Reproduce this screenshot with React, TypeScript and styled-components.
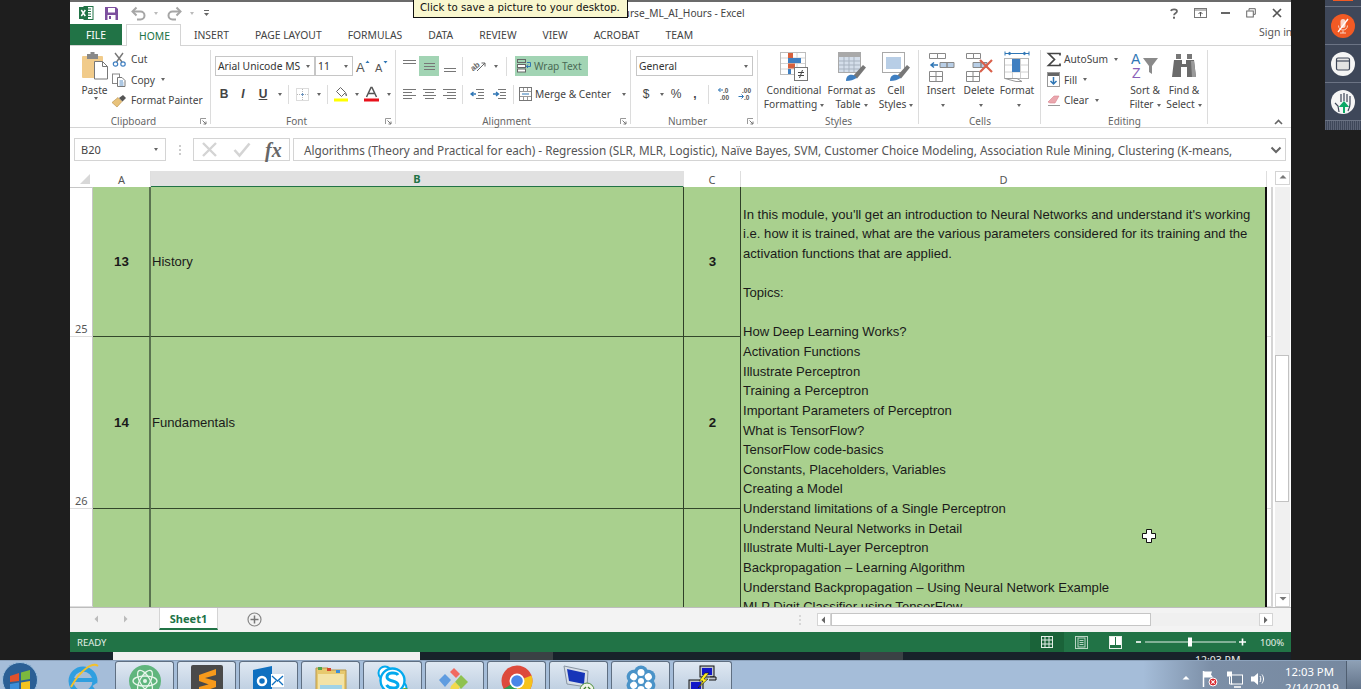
import React from 'react';
import styled, { createGlobalStyle } from 'styled-components';

const UI_FONT = '"Noto Sans", "Open Sans", sans-serif';
const CELL_FONT = '"Liberation Sans", Arial, sans-serif';

const GlobalStyle = createGlobalStyle`
  html, body { margin: 0; padding: 0; background: #1e1e1e; }
  * { box-sizing: border-box; }
  svg { display: block; overflow: visible; }
`;

const Page = styled.div`
  width: 1361px;
  height: 689px;
  overflow: hidden;
  display: flex;
  flex-direction: column;
  background: #1e1e1e;
  font-family: ${UI_FONT};
`;

const Desk = styled.div`
  display: flex;
  height: 652px;
  padding-left: 70px;
  flex: none;
`;

const Window = styled.div`
  position: relative;
  width: 1221px;
  height: 652px;
  flex: none;
  display: flex;
  flex-direction: column;
  background: #fff;
  border-top: 2px solid #6b6b6b;
`;

const TitleBar = styled.div`
  height: 22px;
  display: flex;
  align-items: center;
  flex: none;
  color: #444;
  font-size: 11px;
`;

const Qat = styled.div`
  display: flex;
  align-items: center;
  width: 541px;
  padding-left: 8px;
  flex: none;
`;

const QatBtn = styled.span<{ $w: number }>`
  width: ${p => p.$w}px;
  flex: none;
  display: flex;
  align-items: center;
`;

const TitleText = styled.div`
  flex: 1;
  color: #444;
  font-size: 10.2px;
`;

const WinControls = styled.div`
  display: flex;
  align-items: center;
  margin-right: 1px;
`;

const WinBtn = styled.span`
  width: 25.7px;
  display: flex;
  justify-content: center;
  color: #666;
`;

const Tooltip = styled.div`
  position: absolute;
  left: 343px;
  top: -2px;
  width: 215px;
  height: 18px;
  background: #f9f7cf;
  border: 1px solid #111;
  border-top: none;
  color: #111;
  font-family: "DejaVu Sans", sans-serif;
  font-size: 10.2px;
  line-height: 15px;
  padding-left: 6px;
  white-space: nowrap;
`;

const TabRow = styled.div`
  height: 22px;
  flex: none;
  display: flex;
  align-items: stretch;
  border-bottom: 1px solid #d4d4d4;
  font-size: 10.36px;
  color: #444;
`;

const FileTab = styled.div`
  width: 52px;
  background: #217346;
  color: #fff;
  display: flex;
  align-items: center;
  justify-content: center;
  margin-right: 4px;
`;

const Tab = styled.div<{ $active?: boolean }>`
  display: flex;
  align-items: center;
  padding: ${p => (p.$active ? '0 10px 0 12px' : '0 12px')};
  height: ${p => (p.$active ? '22px' : '21px')};
  color: ${p => (p.$active ? '#217346' : '#444')};
  background: ${p => (p.$active ? '#fff' : 'transparent')};
  border: ${p => (p.$active ? '1px solid #d4d4d4' : '1px solid transparent')};
  border-bottom: none;
`;

const SignIn = styled.div`
  margin-left: auto;
  align-self: center;
  font-size: 10.5px;
  color: #555;
  width: 32px;
  overflow: hidden;
  white-space: nowrap;
  position: relative;
  top: -3px;
`;

const Ribbon = styled.div`
  height: 82px;
  flex: none;
  display: flex;
  border-bottom: 1px solid #d4d4d4;
  font-size: 10.2px;
  color: #444;
`;

const Group = styled.div<{ $w: number; $plain?: boolean }>`
  position: relative;
  width: ${p => p.$w}px;
  flex: none;
  height: 81px;
  &::after {
    content: '';
    display: ${p => (p.$plain ? 'none' : 'block')};
    position: absolute;
    right: 0;
    top: 4px;
    bottom: 3px;
    width: 1px;
    background: #dcdcdc;
  }
`;

const GroupBody = styled.div<{ $pl?: number; $pt?: number }>`
  height: 68px;
  display: flex;
  padding-left: ${p => p.$pl ?? 0}px;
  padding-top: ${p => p.$pt ?? 0}px;
`;

const Stack = styled.div<{ $gap?: number; $w?: number; $mt?: number }>`
  display: flex;
  flex-direction: column;
  flex: none;
  width: ${p => (p.$w ? `${p.$w}px` : 'auto')};
  margin-top: ${p => p.$mt ?? 0}px;
  gap: ${p => p.$gap ?? 0}px;
`;

const GroupLabel = styled.div<{ $launcher?: boolean }>`
  height: 13px;
  text-align: center;
  font-size: 10px;
  line-height: 14px;
  color: #666;
  padding-right: ${p => (p.$launcher ? 14 : 0)}px;
`;

const Launcher = styled.span`
  position: absolute;
  right: 4px;
  bottom: 2px;
`;

const ToolRow = styled.div<{ $gap?: number }>`
  display: flex;
  align-items: center;
  height: 20px;
  gap: ${p => p.$gap ?? 0}px;
`;

const Tool = styled.span<{ $w: number; $on?: boolean }>`
  width: ${p => p.$w}px;
  height: 20px;
  flex: none;
  display: flex;
  align-items: center;
  justify-content: center;
  background: ${p => (p.$on ? '#a2d4b4' : 'transparent')};
  font-family: ${CELL_FONT};
  font-size: 12px;
  color: #444;
`;

const ToolSep = styled.span<{ $m: number }>`
  width: 1px;
  height: 19px;
  flex: none;
  background: #dcdcdc;
  margin: 0 ${p => p.$m}px;
`;

const Select = styled.div<{ $w: number }>`
  width: ${p => p.$w}px;
  height: 20px;
  flex: none;
  border: 1px solid #c6c6c6;
  background: #fff;
  display: flex;
  align-items: center;
  justify-content: space-between;
  padding: 0 4px 0 2px;
  color: #333;
  font-size: 10.3px;
  white-space: nowrap;
`;

const Caret = styled.span<{ $c?: string }>`
  display: inline-block;
  width: 0;
  height: 0;
  flex: none;
  border-left: 2.5px solid transparent;
  border-right: 2.5px solid transparent;
  border-top: 3px solid ${p => p.$c ?? '#666'};
  vertical-align: middle;
  margin-left: 3px;
`;

const SmallBtn = styled.div`
  display: flex;
  align-items: center;
  gap: 3px;
  height: 20.5px;
  white-space: nowrap;
`;

const IconBox = styled.span<{ $w: number }>`
  width: ${p => p.$w}px;
  flex: none;
  display: flex;
  justify-content: center;
`;

const LargeBtn = styled.div<{ $w: number }>`
  width: ${p => p.$w}px;
  flex: none;
  display: flex;
  flex-direction: column;
  align-items: center;
  text-align: center;
  line-height: 14px;
  white-space: nowrap;
`;

const LargeIcon = styled.div<{ $h?: number }>`
  height: ${p => p.$h ?? 32}px;
  display: flex;
  align-items: center;
  justify-content: center;
`;

const WrapLabel = styled.span<{ $w: number }>`
  display: flex;
  align-items: center;
  gap: 2px;
  width: ${p => p.$w}px;
  height: 20px;
  padding-left: 2px;
  background: #a2d4b4;
  color: #4a6a55;
  white-space: nowrap;
`;

const MergeLabel = styled.span`
  display: flex;
  align-items: center;
  gap: 3px;
  padding-left: 2px;
  white-space: nowrap;
`;

const MergeCaret = styled(Caret)`
  margin-left: 8px;
`;

const Collapse = styled.div`
  position: absolute;
  right: 8px;
  bottom: 2px;
`;

const FormulaBar = styled.div`
  height: 43px;
  flex: none;
  display: flex;
  align-items: flex-start;
  padding: 10px 5px 0 4px;
  background: #fff;
`;

const NameBox = styled.div`
  width: 92px;
  height: 23px;
  border: 1px solid #d4d4d4;
  display: flex;
  align-items: center;
  justify-content: space-between;
  padding: 0 7px 0 6px;
  color: #444;
  font-size: 11px;
`;

const Dots = styled.span`
  width: 27px;
  height: 23px;
  display: flex;
  align-items: center;
  justify-content: center;
`;

const FxBox = styled.div`
  width: 97px;
  height: 23px;
  border: 1px solid #d4d4d4;
  display: flex;
  align-items: center;
  gap: 14.5px;
  padding-left: 7px;
`;

const FxGlyph = styled.span`
  font-family: "Liberation Serif", serif;
  font-style: italic;
  font-weight: bold;
  font-size: 20px;
  line-height: 20px;
  color: #666;
`;

const FormulaInput = styled.div`
  flex: 1;
  margin-left: 3px;
  height: 23px;
  border: 1px solid #d4d4d4;
  display: flex;
  align-items: center;
  justify-content: space-between;
  padding: 0 3px 0 10px;
  color: #555;
  font-size: 11.75px;
  white-space: nowrap;
  overflow: hidden;
`;

const columnTemplate = '23px 58px 533px 57px 526px 6px 18px';

const ColHeaders = styled.div`
  height: 16px;
  flex: none;
  display: grid;
  grid-template-columns: ${columnTemplate};
  font-size: 11px;
  color: #555;
  background: #fff;
`;

const Corner = styled.div`
  display: flex;
  align-items: flex-end;
  justify-content: flex-end;
  padding: 0 3px 3px 0;
  border-bottom: 1px solid #c6c6c6;
`;

const ColHead = styled.div<{ $sel?: boolean }>`
  display: flex;
  align-items: center;
  justify-content: center;
  background: ${p => (p.$sel ? '#e1e1e1' : '#fff')};
  color: ${p => (p.$sel ? '#217346' : '#555')};
  font-weight: ${p => (p.$sel ? 700 : 400)};
  border-right: 1px solid ${p => (p.$sel ? '#e1e1e1' : '#dedede')};
  border-bottom: ${p => (p.$sel ? '2px solid #217346' : '1px solid #c6c6c6')};
`;

const UpCell = styled.div`
  grid-column: 6 / span 2;
  display: flex;
  justify-content: flex-end;
  padding-right: 1px;
`;

const Sheet = styled.div`
  position: relative;
  height: 420px;
  flex: none;
  display: grid;
  grid-template-columns: ${columnTemplate};
  grid-template-rows: 150px 172px 98px;
  overflow: hidden;
  font-family: ${CELL_FONT};
  font-size: 13.1px;
  color: #1a1a1a;
`;

const RowHead = styled.div`
  display: flex;
  align-items: flex-end;
  padding: 0 0 1px 5px;
  font-family: ${UI_FONT};
  font-size: 11px;
  line-height: 12px;
  color: #555;
  border-right: 1px solid #c6c6c6;
  border-bottom: 1px solid #dedede;
`;

const Cell = styled.div<{ $bold?: boolean; $center?: boolean; $open?: boolean; $soft?: boolean }>`
  background: #a9d08e;
  display: flex;
  align-items: center;
  justify-content: ${p => (p.$center ? 'center' : 'flex-start')};
  padding: 0 0 0 ${p => (p.$center ? 1 : 1)}px;
  font-weight: ${p => (p.$bold ? 700 : 400)};
  font-size: ${p => (p.$bold ? '13.33px' : 'inherit')};
  border-right: ${p => (p.$soft ? '2px solid #5a7350' : '1px solid #2f4028')};
  border-bottom: ${p => (p.$open ? 'none' : '1px solid #33472b')};
`;

const Merged = styled.div`
  grid-column: 5;
  grid-row: 1 / span 3;
  background: #a9d08e;
  border-right: 2px solid #111;
  padding: 17.5px 0 0 2px;
  line-height: 19.65px;
  overflow: hidden;
  white-space: pre;
`;

const TextLine = styled.div`
  height: 19.65px;
`;

const SpareCell = styled.div`
  border-right: 2px solid #d4d4d4;
  border-bottom: 1px solid #dedede;
`;

const ScrollColumn = styled.div`
  grid-column: 7;
  grid-row: 1 / span 3;
  display: flex;
  flex-direction: column;
  padding-left: 2px;
  background: #fff;
`;

const ScrollTrack = styled.div`
  flex: 1;
  width: 15px;
  padding-top: 168px;
  background: #f0f0f0;
`;

const Thumb = styled.div`
  width: 14px;
  height: 147px;
  background: #fff;
  border: 1px solid #c2c2c2;
`;

const ScrollBtn = styled.div`
  width: 15px;
  height: 14px;
  flex: none;
  background: #fff;
  border: 1px solid #d4d4d4;
  display: flex;
  align-items: center;
  justify-content: center;
`;

const CrossCursor = styled.div`
  position: absolute;
  left: 1072px;
  top: 342px;
`;

const SheetBar = styled.div`
  height: 25px;
  flex: none;
  display: flex;
  align-items: flex-start;
  background: #f3f3f3;
  border-top: 1px solid #bdbdbd;
`;

const NavArrows = styled.div`
  width: 89px;
  height: 22px;
  display: flex;
  align-items: center;
  gap: 21px;
  padding-left: 23px;
  flex: none;
`;

const SheetTab = styled.div`
  width: 59px;
  height: 22px;
  background: #fff;
  border: 1px solid #d4d4d4;
  border-top: none;
  border-bottom: 2px solid #217346;
  color: #217346;
  font-size: 11px;
  font-weight: 700;
  display: flex;
  align-items: center;
  justify-content: center;
`;

const AddSheet = styled.div`
  margin: 4px 0 0 29px;
`;

const HScroll = styled.div`
  margin-left: auto;
  margin-right: 18px;
  margin-top: 5px;
  display: flex;
  align-items: center;
`;

const HDots = styled.span`
  width: 18px;
`;

const HBtn = styled.div`
  width: 14px;
  height: 13px;
  background: #fff;
  border: 1px solid #d4d4d4;
  display: flex;
  align-items: center;
  justify-content: center;
`;

const HTrack = styled.div`
  width: 428px;
  height: 13px;
  background: #f0f0f0;
`;

const HThumb = styled.div`
  width: 320px;
  height: 13px;
  background: #fff;
  border: 1px solid #c6c6c6;
`;

const StatusBar = styled.div`
  height: 20px;
  flex: none;
  display: flex;
  align-items: center;
  background: #217346;
  color: #e4efe8;
  font-size: 9.5px;
  padding-left: 7px;
`;

const ViewBtn = styled.span<{ $on?: boolean }>`
  width: 34px;
  height: 20px;
  flex: none;
  display: flex;
  align-items: center;
  justify-content: center;
  background: ${p => (p.$on ? '#1a6339' : 'transparent')};
`;

const StatusRight = styled.div`
  margin-left: auto;
  display: flex;
  align-items: center;
`;

const SliderWrap = styled.span`
  margin-left: 4px;
`;

const ZoomText = styled.span`
  width: 45px;
  text-align: left;
  padding-left: 14px;
`;

const SidePanel = styled.div`
  margin-left: 34px;
  width: 36px;
  height: 130px;
  flex: none;
  background: #3e4759;
  display: flex;
  flex-direction: column;
`;

const SideSlot = styled.div<{ $h: number }>`
  height: ${p => p.$h}px;
  flex: none;
  display: flex;
  align-items: center;
  justify-content: center;
  border-bottom: 1px solid #6b7384;
`;

const SideGrip = styled.div`
  flex: 1;
  background: repeating-linear-gradient(90deg, #5a6274 0 1px, #3e4759 1px 2px);
`;

const OrangeTick = styled.div`
  width: 20px;
  height: 1px;
  margin-bottom: 6px;
  background: #f15a24;
`;

const Strip = styled.div`
  height: 8px;
  flex: none;
  display: flex;
  background: #1e1e1e;
`;

const StripPart = styled.div<{ $w: number; $c: string }>`
  width: ${p => p.$w}px;
  flex: none;
  background: ${p => p.$c};
  overflow: hidden;
`;

const StripClock = styled.div`
  color: #e8e8e8;
  font-size: 10.5px;
  line-height: 14px;
  padding-left: 292px;
  padding-top: 1px;
  white-space: nowrap;
`;

const Taskbar = styled.div`
  height: 29px;
  flex: none;
  display: flex;
  align-items: flex-start;
  overflow: hidden;
  border-top: 1px solid #8da3bd;
  background: linear-gradient(90deg, #a5bdd9 0, #a5bdd9 84%, #7c8fa7 89%, #76889f 100%);
`;

const StartSlot = styled.div`
  width: 65px;
  flex: none;
  padding: 1px 0 0 2px;
`;

const IeSlot = styled.div`
  width: 50px;
  flex: none;
  padding: 2px 0 0 3px;
`;

const TaskBtn = styled.div`
  width: 59px;
  height: 32px;
  flex: none;
  margin-right: 3px;
  display: flex;
  justify-content: center;
  padding-top: 3px;
  border: 1px solid #5f6f82;
  border-bottom: none;
  border-radius: 3px 3px 0 0;
  background: linear-gradient(180deg, #dfe8f2 0, #bccde0 100%);
`;

const Tray = styled.div`
  margin-left: auto;
  display: flex;
  align-items: center;
  height: 28px;
  color: #fff;
`;

const TrayIcon = styled.span<{ $w: number }>`
  width: ${p => p.$w}px;
  flex: none;
  display: flex;
  justify-content: center;
  padding-top: 7px;
`;

const Clock = styled.div`
  width: 68px;
  margin-left: 8px;
  padding-left: 7px;
  font-size: 11.3px;
  line-height: 16px;
  align-self: flex-start;
  padding-top: 3px;
  white-space: nowrap;
`;

const ShowDesktop = styled.div`
  width: 15px;
  height: 28px;
  flex: none;
  border-left: 1px solid #4f5e70;
  background: linear-gradient(180deg, #8ea0b5, #63748a);
`;

const Ico = ({ w, h = w, children }: { w: number; h?: number; children: React.ReactNode }) => (
  <svg width={w} height={h} viewBox={`0 0 ${w} ${h}`} fill="none">{children}</svg>
);

const ExcelIcon = () => (
  <Ico w={16}>
    <rect x="6" y="1.5" width="9" height="13" fill="#fff" stroke="#217346" />
    <path d="M9 4h4M9 6.500h4M9 9h4M9 11.500h4" stroke="#217346" />
    <rect x="1" y="2" width="9" height="12" fill="#217346" />
    <path d="M3.300 5l4 6M7.300 5l-4 6" stroke="#fff" strokeWidth="1.500" />
  </Ico>
);

const SaveIcon = () => (
  <Ico w={15}>
    <path d="M1 1h11l2 2v11H1z" fill="#7c4f9e" />
    <rect x="4" y="2" width="7" height="4.500" fill="#fff" />
    <rect x="3.500" y="9" width="8" height="5" fill="#fff" />
    <rect x="5" y="10" width="2" height="3" fill="#7c4f9e" />
  </Ico>
);

const UndoIcon = ({ flip }: { flip?: boolean }) => (
  <Ico w={17} h={14}>
    <g transform={flip ? 'translate(17 0) scale(-1 1)' : undefined}>
      <path d="M3 5.500h7.500a4 4 0 0 1 0 8H7" stroke="#a6a6a6" strokeWidth="2" />
      <path d="M6.500 1.500L2.500 5.500l4 4" stroke="#a6a6a6" strokeWidth="2" />
    </g>
  </Ico>
);

const QatMore = () => (
  <Ico w={7} h={8}>
    <path d="M1 1.500h5" stroke="#666" />
    <path d="M1 4l2.500 3L6 4z" fill="#666" />
  </Ico>
);

const HelpGlyph = () => (
  <Ico w={8} h={11}>
    <path d="M1 3C1.500 .8 7 .6 7 3.300 7 5.300 4 5.300 4 7.300" stroke="#666" strokeWidth="1.700" />
    <rect x="3" y="8.700" width="2" height="2" fill="#666" />
  </Ico>
);

const RibbonOptIcon = () => (
  <Ico w={13} h={10}>
    <rect x=".5" y=".5" width="12" height="9" stroke="#777" />
    <path d="M1 2h11" stroke="#777" />
    <path d="M6.500 8.500V4M4.500 6l2-2 2 2" stroke="#555" />
  </Ico>
);

const MinIcon = () => <Ico w={9} h={3}><rect y="0" width="9" height="2" fill="#666" /></Ico>;

const RestoreIcon = () => (
  <Ico w={10}>
    <path d="M3 2.500V.700h6.300v5.600H7.500" stroke="#666" />
    <rect x=".7" y="3" width="6.600" height="6" stroke="#666" />
  </Ico>
);

const CloseIcon = () => (
  <Ico w={10}>
    <path d="M1 1l8 8M9 1L1 9" stroke="#555" strokeWidth="1.700" />
  </Ico>
);

const PasteIcon = () => (
  <Ico w={28} h={28}>
    <rect x="1" y="4" width="21" height="22" rx="1" fill="#f1cb8a" />
    <rect x="6" y="2" width="11" height="5" fill="#888" />
    <rect x="9.500" y="0" width="4" height="3" fill="#888" />
    <path d="M13.500 9.500h8l5 5v12.500h-13z" fill="#fff" stroke="#777" />
    <path d="M21.500 9.500v5h5" stroke="#777" />
  </Ico>
);

const CutIcon = () => (
  <Ico w={15}>
    <path d="M3 1l7 9M11 1L4.500 10" stroke="#777" strokeWidth="1.400" />
    <circle cx="3.500" cy="12" r="2.200" stroke="#3f7fc1" strokeWidth="1.200" />
    <circle cx="11" cy="12" r="2.200" stroke="#3f7fc1" strokeWidth="1.200" />
  </Ico>
);

const CopyIcon = () => (
  <Ico w={14}>
    <rect x=".5" y="1" width="7" height="9.500" fill="#fff" stroke="#888" />
    <path d="M5.500 4.500h4.500l3 3v6h-7.500z" fill="#fff" stroke="#777" />
    <path d="M7.500 8h3.500M7.500 10h4M7.500 12h4" stroke="#5a8fc5" />
  </Ico>
);

const BrushIcon = () => (
  <Ico w={16} h={13}>
    <path d="M1 8.500l6-5 4 4-5 5.500z" fill="#e8c27a" stroke="#b58f4c" strokeWidth=".6" />
    <path d="M8 4l4-3 3 3-3.500 3.500z" fill="#555" />
  </Ico>
);

const GrowIcon = ({ up }: { up?: boolean }) => (
  <Ico w={15} h={16}>
    <text x="0" y="14" fontFamily={CELL_FONT} fontSize={up ? 13 : 11} fill="#555">A</text>
    <path d={up ? 'M9.500 5L11.500 2.500l2 2.500z' : 'M8.500 3h4l-2 2.500z'} fill="#2f76b5" />
  </Ico>
);

const BorderIcon = () => (
  <Ico w={13}>
    <rect x=".5" y=".5" width="12" height="12" stroke="#b9b9b9" strokeDasharray="1 1" />
    <path d="M6.500 1v11M1 6.500h11" stroke="#b9b9b9" strokeDasharray="1 1" />
    <path d="M5 6.500h3M6.500 5v3" stroke="#6c93bd" />
  </Ico>
);

const FillIcon = () => (
  <Ico w={15} h={16}>
    <path d="M6.500 1.500l5 5-4 4-5-5z" fill="#fff" stroke="#666" />
    <path d="M11.500 6.500c1.500 1.500 2 3 1 3.500s-1.500-1.500-1-3.500z" fill="#666" />
    <rect y="12.500" width="14" height="3" fill="#ffff00" />
  </Ico>
);

const FontColorIcon = () => (
  <Ico w={15} h={16}>
    <path d="M2.500 11L7 1.500h1L12.500 11M4.500 7.500h6" stroke="#555" strokeWidth="1.500" />
    <rect y="12.500" width="15" height="3" fill="#e8111b" />
  </Ico>
);

const LinesIcon = ({ kind }: { kind: 'left' | 'center' | 'right' | 'top' | 'mid' | 'bot' }) => {
  const paths: Record<string, string> = {
    left: 'M1 2.500h13M1 5.500h9M1 8.500h13M1 11.500h9',
    center: 'M1 2.500h13M3 5.500h9M1 8.500h13M3 11.500h9',
    right: 'M1 2.500h13M5 5.500h9M1 8.500h13M5 11.500h9',
    top: 'M1 1.500h13M1 4.500h13',
    mid: 'M2 4.500h11M2 7.500h11M2 10.500h11',
    bot: 'M2 9.500h12M2 12.500h12',
  };
  return <Ico w={15} h={14}><path d={paths[kind]} stroke="#777" /></Ico>;
};

const OrientIcon = () => (
  <Ico w={18} h={18}>
    <text x="1" y="12" fontFamily={CELL_FONT} fontSize="8" fontWeight="700" fill="#666" transform="rotate(-38 6 9)">ab</text>
    <path d="M8 14L16 6M16 6h-3.500M16 6v3.500" stroke="#666" />
  </Ico>
);

const IndentIcon = ({ inc }: { inc?: boolean }) => (
  <Ico w={15} h={12}>
    <path d="M6 1.500h8M8 4.500h6M8 7.500h6M6 10.500h8" stroke="#777" />
    <path d={inc ? 'M1 6h5M4 4l2.500 2L4 8' : 'M1 6h5M3.500 4L1 6l2.500 2'} stroke="#2f76b5" strokeWidth="1.300" />
  </Ico>
);

const WrapIcon = () => (
  <Ico w={15} h={14}>
    <rect x=".5" y=".5" width="8" height="3" stroke="#666" />
    <rect x=".5" y="5.500" width="8" height="3" stroke="#666" fill="#fff" />
    <rect x=".5" y="10" width="8" height="3" stroke="#666" fill="#fff" />
    <path d="M10 3.500h3.500v4H9.500M11 5.500L9.500 7.500 11 9" stroke="#2f76b5" />
  </Ico>
);

const MergeIcon = () => (
  <Ico w={13} h={14}>
    <rect x=".5" y=".5" width="12" height="13" stroke="#777" />
    <path d="M1 4.500h11M1 9.500h11M4.500 1v3.500M8.500 1v3.500M4.500 9.500V13M8.500 9.500V13" stroke="#999" />
    <path d="M3 7h7" stroke="#2f76b5" />
  </Ico>
);

const DecimalIcon = ({ inc }: { inc?: boolean }) => (
  <Ico w={14} h={14}>
    <text x={inc ? 5 : 4} y="6" fontFamily={CELL_FONT} fontSize="6.500" fontWeight="700" fill="#555">{inc ? '.0' : '.00'}</text>
    <text x={inc ? 2 : 6} y="13" fontFamily={CELL_FONT} fontSize="6.500" fontWeight="700" fill="#555">{inc ? '.00' : '.0'}</text>
    <path d={inc ? 'M5 3H.5M2.500 1L.5 3l2 2' : 'M.5 9.500H5M3.500 7.500l2 2-2 2'} stroke="#2f76b5" />
  </Ico>
);

const CondIcon = () => (
  <Ico w={28} h={30}>
    <rect x=".5" y=".5" width="25" height="22" fill="#fff" stroke="#bdbdbd" />
    <path d="M9 1v21M17 1v21M1 6h24M1 11.500h24M1 17h24" stroke="#d4d4d4" />
    <rect x="8" y="1" width="5" height="5" fill="#d6603d" />
    <rect x="8" y="6" width="13" height="5" fill="#3f7fc1" />
    <rect x="8" y="11.500" width="7" height="5" fill="#d6603d" />
    <rect x="8" y="17" width="3" height="5" fill="#3f7fc1" />
    <rect x="14.500" y="15.500" width="13" height="13" fill="#fff" stroke="#777" />
    <path d="M18 20.500h6M18 23.500h6M22.500 18l-3 8" stroke="#444" />
  </Ico>
);

const TableIcon = ({ full }: { full?: boolean }) => (
  <Ico w={28} h={30}>
    <rect x=".5" y=".5" width="22" height="20" fill="#fff" stroke="#a9a9a9" />
    {full ? (
      <rect x="4" y="5" width="15" height="12" fill="#b8cee6" />
    ) : (
      <>
        <rect x="1" y="1" width="21" height="4" fill="#a9a9a9" />
        <rect x="1" y="5" width="21" height="15" fill="#d4deea" />
        <path d="M6 5v15M11 5v15M16 5v15M1 9h21M1 13h21M1 17h21" stroke="#a8b3c0" />
      </>
    )}
    <path d="M15 24l10-11 3 2.500-9 11z" fill="#777" />
    <path d="M8 29c0-5 3-7 7-6 2 .5 3 2 3.500 3-3 2-6 3-10.500 3z" fill="#3f7fc1" />
  </Ico>
);

const InsertIcon = () => (
  <Ico w={26} h={30}>
    <path d="M1.500 1.500h8v5h-8zM9.500 1.500h8v5h-8z" stroke="#888" />
    <path d="M12 10.500h7v5h-7zM19 10.500h7v5h-7z" stroke="#888" fill="#b8cee6" />
    <path d="M10 13H3M6 10.500L3 13l3 2.500" stroke="#2f76b5" strokeWidth="1.500" />
    <path d="M1.500 19.500h13v10h-13zM8 19.500v10M1.500 24.500h13" stroke="#888" />
  </Ico>
);

const DeleteIcon = () => (
  <Ico w={28} h={30}>
    <path d="M1.500 1.500h7v5h-7zM8.500 1.500h7v5h-7z" stroke="#888" />
    <path d="M8 10.500h8v5H8zM16 10.500h6v5h-6z" stroke="#888" fill="#b8cee6" />
    <path d="M1.500 19.500h13v10h-13zM8 19.500v10M1.500 24.500h13" stroke="#888" />
    <path d="M15 8l12 12M27 8L15 20" stroke="#d9604a" strokeWidth="2.200" />
  </Ico>
);

const FormatIcon = () => (
  <Ico w={26} h={32}>
    <path d="M1 2.500h24M1 .5v4M25 .5v4M4 2.500l2-1.500v3zM22 2.500l-2-1.500v3z" stroke="#2f76b5" />
    <rect x=".5" y="7.500" width="24" height="20" fill="#fff" stroke="#b5b5b5" />
    <path d="M8.500 8v19M16.500 8v19M1 14h23M1 21h23" stroke="#d0d0d0" />
    <rect x="8" y="8" width="8" height="13" fill="#3f7fc1" />
    <path d="M1 27.500h12l5 3h-6z" fill="#fff" stroke="#999" />
  </Ico>
);

const SigmaIcon = () => (
  <Ico w={14} h={15}>
    <path d="M13 3.500V1.500H1.500L7.500 7.500l-6 6H13v-2" stroke="#444" strokeWidth="1.700" />
  </Ico>
);

const FillDownIcon = () => (
  <Ico w={13} h={15}>
    <rect x=".5" y=".5" width="12" height="14" fill="#fff" stroke="#999" />
    <rect x="1" y="1" width="11" height="3" fill="#666" />
    <path d="M6.500 5v7M3.500 9l3 3 3-3" stroke="#2f76b5" strokeWidth="1.500" />
  </Ico>
);

const EraserIcon = () => (
  <Ico w={14} h={12}>
    <path d="M1 8l6-6 5 0-4 7H3z" fill="#eaa7ae" stroke="#d9838e" strokeWidth=".6" />
    <path d="M1 11.500h12" stroke="#999" />
  </Ico>
);

const SortIcon = () => (
  <Ico w={28} h={30}>
    <text x="0" y="13" fontFamily={CELL_FONT} fontSize="14" fill="#2f76b5">A</text>
    <text x="1" y="27" fontFamily={CELL_FONT} fontSize="14" fill="#8b5fb8">Z</text>
    <path d="M12 7h15l-6 8v8l-3-2v-6z" fill="#8a8a8a" />
  </Ico>
);

const BinocularIcon = () => (
  <Ico w={26} h={26}>
    <path d="M5 1h5v5H5zM16 1h5v5h-5z" fill="#777" />
    <path d="M3 7h8v4h4V7h8l2 17h-9V14h-6v10H1z" fill="#6b6b6b" />
    <path d="M20 8h3l2 16h-4z" fill="#9a9a9a" />
  </Ico>
);

const LauncherIcon = () => (
  <Ico w={7}>
    <path d="M.5 6V.5H6" stroke="#999" />
    <path d="M2.500 2.500L6 6M6 3.500V6H3.500" stroke="#777" />
  </Ico>
);

const UpChevron = () => (
  <Ico w={9} h={6}><path d="M1 5l3.500-3.500L8 5" stroke="#666" strokeWidth="1.600" /></Ico>
);

const DownChevron = () => (
  <Ico w={12} h={8}><path d="M1.500 1.500L6 6l4.500-4.500" stroke="#666" strokeWidth="2" /></Ico>
);

const CrossX = () => <Ico w={17}><path d="M2 2l13 13M15 2L2 15" stroke="#d4d4d4" strokeWidth="2.400" /></Ico>;

const CheckMark = () => <Ico w={18} h={15}><path d="M1.500 8l5 5.500L16.500 1.500" stroke="#d4d4d4" strokeWidth="2.600" /></Ico>;

const CornerTri = () => <Ico w={10}><path d="M10 0v10H0z" fill="#d8d8d8" /></Ico>;

const Arrow = ({ dir, c = '#777' }: { dir: 'up' | 'down' | 'left' | 'right'; c?: string }) => {
  const d = { up: 'M.5 4.500L4 1l3.500 3.500z', down: 'M.5 1L4 4.500 7.500 1z', left: 'M5 .5L1.500 4 5 7.500z', right: 'M2 .5L5.500 4 2 7.500z' }[dir];
  return <Ico w={8} h={8}><path d={d} fill={c} /></Ico>;
};

const PlusCircle = () => (
  <Ico w={15}>
    <circle cx="7.500" cy="7.500" r="6.500" stroke="#888" strokeWidth="1.200" />
    <path d="M3.500 7.500h8M7.500 3.500v8" stroke="#777" strokeWidth="1.500" />
  </Ico>
);

const GridView = () => (
  <Ico w={12}>
    <rect x=".5" y=".5" width="11" height="11" stroke="#e4efe8" />
    <path d="M4 .5v11M8 .5v11M.5 4h11M.5 8h11" stroke="#e4efe8" />
  </Ico>
);

const PageView = () => (
  <Ico w={13}>
    <rect x=".5" y=".5" width="12" height="12" stroke="#b9d4c4" />
    <rect x="3" y="2" width="7" height="9" stroke="#b9d4c4" />
    <path d="M4.500 4.500h4M4.500 6.500h4M4.500 8.500h4" stroke="#b9d4c4" />
  </Ico>
);

const BreakView = () => (
  <Ico w={13}>
    <rect x=".5" y=".5" width="12" height="12" stroke="#e4efe8" />
    <rect x="1" y="1" width="5" height="8" fill="#fff" />
    <rect x="7" y="1" width="5" height="8" fill="#fff" />
  </Ico>
);

const ZoomSlider = () => (
  <Ico w={110} h={12}>
    <path d="M0 6h5" stroke="#fff" strokeWidth="1.600" />
    <path d="M9 6h91" stroke="#e4efe8" />
    <rect x="52" y="1.500" width="4" height="9" fill="#fff" />
    <path d="M103 6h7M106.500 2.500v7" stroke="#fff" strokeWidth="1.600" />
  </Ico>
);

const CursorCross = () => (
  <Ico w={14}>
    <path d="M4.500 .5h5v4h4v5h-4v4h-5v-4h-4v-5h4z" fill="#fff" stroke="#111" />
  </Ico>
);

const MicOff = () => (
  <Ico w={24}>
    <circle cx="12" cy="12" r="12" fill="#f15a24" />
    <rect x="9.500" y="5" width="5" height="9" rx="2.500" fill="#fbd3c4" />
    <path d="M7.500 11.500c0 6 9 6 9 0M12 16.500V19M9 19h6" stroke="#fbd3c4" />
    <path d="M7 18L17 5" stroke="#fff" strokeWidth="1.300" />
  </Ico>
);

const WindowBadge = () => (
  <Ico w={24}>
    <circle cx="12" cy="12" r="12" fill="#f5f5f5" />
    <rect x="5.500" y="6" width="13" height="12" rx="1.500" fill="#e3e3e3" stroke="#3e4759" strokeWidth="1.200" />
    <path d="M5.500 9h13" stroke="#3e4759" strokeWidth="1.200" />
  </Ico>
);

const HandBadge = () => (
  <Ico w={24}>
    <circle cx="12" cy="12" r="12" fill="#f5f5f5" />
    <path d="M4 13l3 3 1 6M10 4v8M13 3v8M16 4v8M19 6v8c0 3-1 5-2 7" stroke="#3e4759" strokeWidth="1.200" />
    <path d="M13 23v-8M10 16l3-3.500 3 3.500z" stroke="#0ca866" strokeWidth="2" fill="#0ca866" />
  </Ico>
);

const StartOrb = () => (
  <Ico w={36} h={36}>
    <circle cx="18" cy="18" r="17.500" fill="#2b5f95" stroke="#9ec0de" />
    <path d="M8 14l9-3v8l-9 1z" fill="#e1512c" />
    <path d="M19 10.500l9-2.500v9l-9 1.500z" fill="#7cb83e" />
    <path d="M8 22l9-1.500v8L8 27z" fill="#3c8ed8" />
    <path d="M19 20.500l9-1.500v8.500l-9 2z" fill="#f2c21f" />
  </Ico>
);

const IeIcon = () => (
  <Ico w={32} h={34}>
    <ellipse cx="15" cy="18" rx="12" ry="12" stroke="#2f9fe0" strokeWidth="5" />
    <path d="M5 17h22" stroke="#2f9fe0" strokeWidth="4" />
    <path d="M30 3C25-1 13 6 3 24" stroke="#f3c02a" strokeWidth="2" />
    <path d="M26 25l4-3" stroke="#a5bdd9" strokeWidth="5" />
  </Ico>
);

const AtomIcon = () => (
  <Ico w={32} h={32}>
    <circle cx="16" cy="16" r="16" fill="#5fb57d" />
    <g stroke="#e6f5ea" strokeWidth="1.300">
      <ellipse cx="16" cy="16" rx="12" ry="5" />
      <ellipse cx="16" cy="16" rx="12" ry="5" transform="rotate(60 16 16)" />
      <ellipse cx="16" cy="16" rx="12" ry="5" transform="rotate(120 16 16)" />
    </g>
    <circle cx="16" cy="16" r="2" fill="#e6f5ea" />
  </Ico>
);

const SublimeIcon = () => (
  <Ico w={32} h={32}>
    <rect width="32" height="32" rx="2" fill="#4a4a4a" />
    <path d="M25 4L8 10v6l17 6v-6L14 13l11-3zM8 16l11 3-11 3v6l17-6v-6z" fill="#f79a1b" />
  </Ico>
);

const OutlookIcon = () => (
  <Ico w={31} h={32}>
    <path d="M0 5L19 1v31L0 28z" fill="#0f70c0" />
    <circle cx="9" cy="16" r="4" stroke="#fff" strokeWidth="2.500" />
    <rect x="18" y="9" width="13" height="13" fill="#fff" />
    <path d="M19 11l5.500 5L30 11M19 20l4-4M30 20l-4-4" stroke="#0f70c0" strokeWidth="1.300" />
  </Ico>
);

const FolderIcon = () => (
  <Ico w={32} h={32}>
    <path d="M1 3h12l2 2h16v27H1z" fill="#e7c96e" stroke="#b9974a" />
    <rect x="3" y="2" width="4" height="3" fill="#52a34a" />
    <rect x="12" y="3" width="4" height="3" fill="#d4452c" />
    <rect x="21" y="5" width="4" height="3" fill="#3c8ed8" />
    <path d="M3 9h26v23H3z" fill="#f3e3a6" />
    <path d="M5 20h22v10H5z" fill="#9fd3e8" />
  </Ico>
);

const SkypeIcon = () => (
  <Ico w={32} h={32}>
    <circle cx="8" cy="8" r="6.500" fill="#fff" stroke="#03a9ee" strokeWidth="2" />
    <circle cx="23" cy="23" r="6.500" fill="#fff" stroke="#03a9ee" strokeWidth="2" />
    <circle cx="15.500" cy="15.500" r="12" fill="#fff" stroke="#03a9ee" strokeWidth="2.400" />
    <path d="M21 10c-2-3-11-3-11 2 0 5 11 3 11 8 0 4-9 4-11.500 0" stroke="#03a9ee" strokeWidth="3" />
    <circle cx="28" cy="28" r="5" fill="#69a920" />
  </Ico>
);

const GitKrakenIcon = () => (
  <Ico w={32} h={32}>
    <path d="M15 3l6 6-4 4-6-6z" fill="#f16a60" />
    <path d="M6 9l6 6-6 7-6-7z" fill="#5f9ce0" />
    <path d="M22 10l7 7-7 7-6-7z" fill="#8fc250" />
    <path d="M12 21l4-4 5 5-5 8-5-5z" fill="#f2d94e" />
  </Ico>
);

const ChromeIcon = () => (
  <Ico w={32} h={32}>
    <circle cx="16" cy="16" r="15.500" fill="#dd4a3c" />
    <path d="M16 16l14.500-5.500A15.500 15.500 0 0 1 16 31.500z" fill="#f6c21c" />
    <path d="M16 16v15.500A15.500 15.500 0 0 1 2.500 24z" fill="#2e9e54" />
    <circle cx="16" cy="16" r="7.500" fill="#fff" />
    <circle cx="16" cy="16" r="5.800" fill="#4a86e8" />
  </Ico>
);

const RdpIcon = () => (
  <Ico w={32} h={32}>
    <path d="M1 1l24 5-1 16-20-3z" fill="#d8dfe8" stroke="#8894a2" />
    <path d="M4 4l18 4-1 11-15-3z" fill="#1634b8" />
    <circle cx="24" cy="25" r="7" fill="#eef4e6" stroke="#4f8f3f" />
    <path d="M20 25l3-3M20 25l3 3M28 25l-3-3M28 25l-3 3" stroke="#3f7f2f" strokeWidth="1.300" />
  </Ico>
);

const PetalIcon = () => (
  <Ico w={32} h={32}>
    <g fill="#4a93c8">
      {[0, 60, 120, 180, 240, 300].map(a => (
        <circle key={a} cx="16" cy="7.500" r="7" transform={`rotate(${a} 16 16)`} />
      ))}
      <circle cx="16" cy="16" r="9" />
    </g>
    {[0, 60, 120, 180, 240, 300].map(a => (
      <circle key={a} cx="16" cy="7.500" r="3.500" fill="#fff" transform={`rotate(${a} 16 16)`} />
    ))}
    <circle cx="16" cy="16" r="3" fill="#fff" />
  </Ico>
);

const PuttyIcon = () => (
  <Ico w={30} h={32}>
    <rect x="12" y="1" width="14" height="11" fill="#bfc4cb" stroke="#111" />
    <rect x="14" y="3" width="10" height="7" fill="#1217c8" />
    <rect x="1" y="15" width="14" height="14" fill="#bfc4cb" stroke="#111" />
    <rect x="3" y="17" width="10" height="9" fill="#1217c8" />
    <path d="M17 8l-6 8h4l-5 7 10-9h-4l5-6z" fill="#ffee22" stroke="#111" strokeWidth=".6" />
    <path d="M22 12h6v3h-7" fill="#bfc4cb" stroke="#111" />
  </Ico>
);

const FlagIcon = () => (
  <Ico w={16} h={18}>
    <path d="M1.500 1v16" stroke="#fff" strokeWidth="1.500" />
    <path d="M2 1.500h8l-1 3 2 3H2z" fill="#fff" />
    <circle cx="11" cy="12" r="4" fill="#d8262c" stroke="#fff" />
    <path d="M9.300 10.300l3.400 3.400M12.700 10.300l-3.400 3.400" stroke="#fff" strokeWidth="1.100" />
  </Ico>
);

const NetIcon = () => (
  <Ico w={17} h={18}>
    <rect x="5.500" y="5" width="11" height="9" fill="#6f8299" stroke="#fff" />
    <path d="M8 17h7" stroke="#fff" strokeWidth="1.500" />
    <rect x="1" y="1.500" width="5" height="5" fill="#fff" />
    <path d="M3.500 6.500V14h3" stroke="#fff" />
  </Ico>
);

const SoundIcon = () => (
  <Ico w={16} h={16}>
    <path d="M1 5.500h3L8 2v12L4 10.500H1z" fill="#fff" />
    <path d="M10 5c1 2 1 4 0 6M12 3.500c2 3 2 6 0 9" stroke="#fff" />
  </Ico>
);

const sheetLines = [
  "In this module, you'll get an introduction to Neural Networks and understand it's working",
  'i.e. how it is trained, what are the various parameters considered for its training and the',
  'activation functions that are applied.',
  '',
  'Topics:',
  '',
  'How Deep Learning Works?',
  'Activation Functions',
  'Illustrate Perceptron',
  'Training a Perceptron',
  'Important Parameters of Perceptron',
  'What is TensorFlow?',
  'TensorFlow code-basics',
  'Constants, Placeholders, Variables',
  'Creating a Model',
  'Understand limitations of a Single Perceptron',
  'Understand Neural Networks in Detail',
  'Illustrate Multi-Layer Perceptron',
  'Backpropagation – Learning Algorithm',
  'Understand Backpropagation – Using Neural Network Example',
  'MLP Digit Classifier using TensorFlow',
];

const tabs = ['INSERT', 'PAGE LAYOUT', 'FORMULAS', 'DATA', 'REVIEW', 'VIEW', 'ACROBAT', 'TEAM'];

const taskIcons = [
  <AtomIcon key="atom" />,
  <SublimeIcon key="sublime" />,
  <OutlookIcon key="outlook" />,
  <FolderIcon key="folder" />,
  <SkypeIcon key="skype" />,
  <GitKrakenIcon key="kraken" />,
  <ChromeIcon key="chrome" />,
  <RdpIcon key="rdp" />,
  <PetalIcon key="petal" />,
  <PuttyIcon key="putty" />,
];

function App() {
  return (
    <Page>
      <GlobalStyle />
      <Desk>
        <Window>
          <TitleBar>
            <Qat>
              <QatBtn $w={26}><ExcelIcon /></QatBtn>
              <QatBtn $w={26}><SaveIcon /></QatBtn>
              <QatBtn $w={21}><UndoIcon /></QatBtn>
              <QatBtn $w={15}><Caret $c="#bbb" /></QatBtn>
              <QatBtn $w={21}><UndoIcon flip /></QatBtn>
              <QatBtn $w={16}><Caret $c="#bbb" /></QatBtn>
              <QatBtn $w={10}><QatMore /></QatBtn>
            </Qat>
            <TitleText>Course_ML_AI_Hours - Excel</TitleText>
            <WinControls>
              <WinBtn><HelpGlyph /></WinBtn>
              <WinBtn><RibbonOptIcon /></WinBtn>
              <WinBtn><MinIcon /></WinBtn>
              <WinBtn><RestoreIcon /></WinBtn>
              <WinBtn><CloseIcon /></WinBtn>
            </WinControls>
          </TitleBar>
          <Tooltip>Click to save a picture to your desktop.</Tooltip>
          <TabRow>
            <FileTab>FILE</FileTab>
            <Tab $active>HOME</Tab>
            {tabs.map(t => <Tab key={t}>{t}</Tab>)}
            <SignIn>Sign in</SignIn>
          </TabRow>
          <Ribbon>
            <Group $w={141}>
              <GroupBody $pl={9} $pt={2}>
                <LargeBtn $w={31}>
                  <LargeIcon $h={35}><PasteIcon /></LargeIcon>
                  <span>Paste</span>
                  <Caret />
                </LargeBtn>
                <Stack $mt={1}>
                  <SmallBtn><IconBox $w={18}><CutIcon /></IconBox>Cut</SmallBtn>
                  <SmallBtn><IconBox $w={18}><CopyIcon /></IconBox>Copy <Caret /></SmallBtn>
                  <SmallBtn><IconBox $w={18}><BrushIcon /></IconBox>Format Painter</SmallBtn>
                </Stack>
              </GroupBody>
              <GroupLabel $launcher>Clipboard</GroupLabel>
              <Launcher><LauncherIcon /></Launcher>
            </Group>
            <Group $w={185}>
              <GroupBody $pl={4} $pt={10}>
                <Stack $gap={8}>
                  <ToolRow>
                    <Select $w={100}>Arial Unicode MS<Caret /></Select>
                    <Select $w={38}>11<Caret /></Select>
                    <Tool $w={20}><GrowIcon up /></Tool>
                    <Tool $w={18}><GrowIcon /></Tool>
                  </ToolRow>
                  <ToolRow>
                    <Tool $w={18}><b>B</b></Tool>
                    <Tool $w={20}><i><b>I</b></i></Tool>
                    <Tool $w={20}><u><b>U</b></u></Tool>
                    <Tool $w={10}><Caret /></Tool>
                    <ToolSep $m={5} />
                    <Tool $w={16}><BorderIcon /></Tool>
                    <Tool $w={14}><Caret /></Tool>
                    <ToolSep $m={3} />
                    <Tool $w={20}><FillIcon /></Tool>
                    <Tool $w={8}><Caret /></Tool>
                    <Tool $w={24}><FontColorIcon /></Tool>
                    <Tool $w={8}><Caret /></Tool>
                  </ToolRow>
                </Stack>
              </GroupBody>
              <GroupLabel $launcher>Font</GroupLabel>
              <Launcher><LauncherIcon /></Launcher>
            </Group>
            <Group $w={235}>
              <GroupBody $pl={3} $pt={10}>
                <Stack $gap={8}>
                  <ToolRow>
                    <Tool $w={20}><LinesIcon kind="top" /></Tool>
                    <Tool $w={20} $on><LinesIcon kind="mid" /></Tool>
                    <Tool $w={20}><LinesIcon kind="bot" /></Tool>
                    <ToolSep $m={3} />
                    <Tool $w={24}><OrientIcon /></Tool>
                    <Tool $w={8}><Caret /></Tool>
                    <ToolSep $m={8} />
                    <WrapLabel $w={73}><WrapIcon />Wrap Text</WrapLabel>
                  </ToolRow>
                  <ToolRow>
                    <Tool $w={20}><LinesIcon kind="left" /></Tool>
                    <Tool $w={20}><LinesIcon kind="center" /></Tool>
                    <Tool $w={20}><LinesIcon kind="right" /></Tool>
                    <ToolSep $m={3} />
                    <Tool $w={22}><IndentIcon /></Tool>
                    <Tool $w={22}><IndentIcon inc /></Tool>
                    <ToolSep $m={3} />
                    <MergeLabel><MergeIcon />Merge &amp; Center<MergeCaret /></MergeLabel>
                  </ToolRow>
                </Stack>
              </GroupBody>
              <GroupLabel $launcher>Alignment</GroupLabel>
              <Launcher><LauncherIcon /></Launcher>
            </Group>
            <Group $w={127}>
              <GroupBody $pl={5} $pt={10}>
                <Stack $gap={8}>
                  <ToolRow><Select $w={117}>General<Caret /></Select></ToolRow>
                  <ToolRow>
                    <Tool $w={20}>$</Tool>
                    <Tool $w={8}><Caret /></Tool>
                    <Tool $w={24}>%</Tool>
                    <Tool $w={14}><b>,</b></Tool>
                    <ToolSep $m={6} />
                    <Tool $w={20}><DecimalIcon inc /></Tool>
                    <Tool $w={20}><DecimalIcon /></Tool>
                  </ToolRow>
                </Stack>
              </GroupBody>
              <GroupLabel $launcher>Number</GroupLabel>
              <Launcher><LauncherIcon /></Launcher>
            </Group>
            <Group $w={161}>
              <GroupBody $pl={1} $pt={5}>
                <LargeBtn $w={70}><LargeIcon><CondIcon /></LargeIcon>Conditional<span>Formatting<Caret /></span></LargeBtn>
                <LargeBtn $w={45}><LargeIcon><TableIcon /></LargeIcon>Format as<span>Table<Caret /></span></LargeBtn>
                <LargeBtn $w={44}><LargeIcon><TableIcon full /></LargeIcon>Cell<span>Styles<Caret /></span></LargeBtn>
              </GroupBody>
              <GroupLabel>Styles</GroupLabel>
            </Group>
            <Group $w={122}>
              <GroupBody $pl={3} $pt={5}>
                <LargeBtn $w={38}><LargeIcon><InsertIcon /></LargeIcon>Insert<span><Caret /></span></LargeBtn>
                <LargeBtn $w={38}><LargeIcon><DeleteIcon /></LargeIcon>Delete<span><Caret /></span></LargeBtn>
                <LargeBtn $w={38}><LargeIcon><FormatIcon /></LargeIcon>Format<span><Caret /></span></LargeBtn>
              </GroupBody>
              <GroupLabel>Cells</GroupLabel>
            </Group>
            <Group $w={167}>
              <GroupBody $pl={5} $pt={2}>
                <Stack $w={80} $mt={1}>
                  <SmallBtn><IconBox $w={15}><SigmaIcon /></IconBox>AutoSum <Caret /></SmallBtn>
                  <SmallBtn><IconBox $w={15}><FillDownIcon /></IconBox>Fill<Caret /></SmallBtn>
                  <SmallBtn><IconBox $w={15}><EraserIcon /></IconBox>Clear<Caret /></SmallBtn>
                </Stack>
                <LargeBtn $w={38}><LargeIcon $h={35}><SortIcon /></LargeIcon>Sort &amp;<span>Filter<Caret /></span></LargeBtn>
                <LargeBtn $w={40}><LargeIcon $h={35}><BinocularIcon /></LargeIcon>Find &amp;<span>Select<Caret /></span></LargeBtn>
              </GroupBody>
              <GroupLabel>Editing</GroupLabel>
            </Group>
            <Group $w={83} $plain>
              <Collapse><UpChevron /></Collapse>
            </Group>
          </Ribbon>
          <FormulaBar>
            <NameBox>B20<Caret /></NameBox>
            <Dots><Ico w={2} h={10}><path d="M1 0v2M1 4v2M1 8v2" stroke="#999" /></Ico></Dots>
            <FxBox><CrossX /><CheckMark /><FxGlyph>fx</FxGlyph></FxBox>
            <FormulaInput>
              <span>Algorithms (Theory and Practical for each) - Regression (SLR, MLR, Logistic), Naïve Bayes, SVM, Customer Choice Modeling, Association Rule Mining, Clustering (K-means,</span>
              <DownChevron />
            </FormulaInput>
          </FormulaBar>
          <ColHeaders>
            <Corner><CornerTri /></Corner>
            <ColHead>A</ColHead>
            <ColHead $sel>B</ColHead>
            <ColHead>C</ColHead>
            <ColHead>D</ColHead>
            <UpCell><ScrollBtn><Arrow dir="up" /></ScrollBtn></UpCell>
          </ColHeaders>
          <Sheet>
            <RowHead>25</RowHead>
            <Cell $bold $center $soft>13</Cell>
            <Cell>History</Cell>
            <Cell $bold $center>3</Cell>
            <Merged>
              {sheetLines.map((line, i) => <TextLine key={i}>{line}</TextLine>)}
            </Merged>
            <SpareCell />
            <ScrollColumn>
              <ScrollTrack><Thumb /></ScrollTrack>
              <ScrollBtn><Arrow dir="down" /></ScrollBtn>
            </ScrollColumn>
            <RowHead>26</RowHead>
            <Cell $bold $center $soft>14</Cell>
            <Cell>Fundamentals</Cell>
            <Cell $bold $center>2</Cell>
            <SpareCell />
            <RowHead />
            <Cell $open $soft />
            <Cell $open />
            <Cell $open />
            <SpareCell />
            <CrossCursor><CursorCross /></CrossCursor>
          </Sheet>
          <SheetBar>
            <NavArrows><Arrow dir="left" c="#bbb" /><Arrow dir="right" c="#bbb" /></NavArrows>
            <SheetTab>Sheet1</SheetTab>
            <AddSheet><PlusCircle /></AddSheet>
            <HScroll>
              <HDots><Ico w={2} h={10}><path d="M1 0v2M1 4v2M1 8v2" stroke="#bbb" /></Ico></HDots>
              <HBtn><Arrow dir="left" c="#666" /></HBtn>
              <HTrack><HThumb /></HTrack>
              <HBtn><Arrow dir="right" c="#666" /></HBtn>
            </HScroll>
          </SheetBar>
          <StatusBar>
            READY
            <StatusRight>
              <ViewBtn $on><GridView /></ViewBtn>
              <ViewBtn><PageView /></ViewBtn>
              <ViewBtn><BreakView /></ViewBtn>
              <SliderWrap><ZoomSlider /></SliderWrap>
              <ZoomText>100%</ZoomText>
            </StatusRight>
          </StatusBar>
        </Window>
        <SidePanel>
          <SideSlot $h={7}><OrangeTick /></SideSlot>
          <SideSlot $h={38}><MicOff /></SideSlot>
          <SideSlot $h={38}><WindowBadge /></SideSlot>
          <SideSlot $h={38}><HandBadge /></SideSlot>
          <SideGrip />
        </SidePanel>
      </Desk>
      <Strip>
        <StripPart $w={70} $c="#1e1e1e" />
        <StripPart $w={43} $c="#18222a" />
        <StripPart $w={307} $c="#f0f0f0" />
        <StripPart $w={90} $c="#18222a" />
        <StripPart $w={43} $c="#3a4144" />
        <StripPart $w={307} $c="#18222a" />
        <StripPart $w={43} $c="#3a4144" />
        <StripPart $w={388} $c="#18222a">
          <StripClock>12:03 PM</StripClock>
        </StripPart>
      </Strip>
      <Taskbar>
        <StartSlot><StartOrb /></StartSlot>
        <IeSlot><IeIcon /></IeSlot>
        {taskIcons.map(icon => <TaskBtn key={icon.key}>{icon}</TaskBtn>)}
        <Tray>
          <TrayIcon $w={24}><Arrow dir="up" c="#fff" /></TrayIcon>
          <TrayIcon $w={24}><FlagIcon /></TrayIcon>
          <TrayIcon $w={24}><NetIcon /></TrayIcon>
          <TrayIcon $w={24}><SoundIcon /></TrayIcon>
          <Clock>12:03 PM<br />2/14/2019</Clock>
          <ShowDesktop />
        </Tray>
      </Taskbar>
    </Page>
  );
}

export default App;
